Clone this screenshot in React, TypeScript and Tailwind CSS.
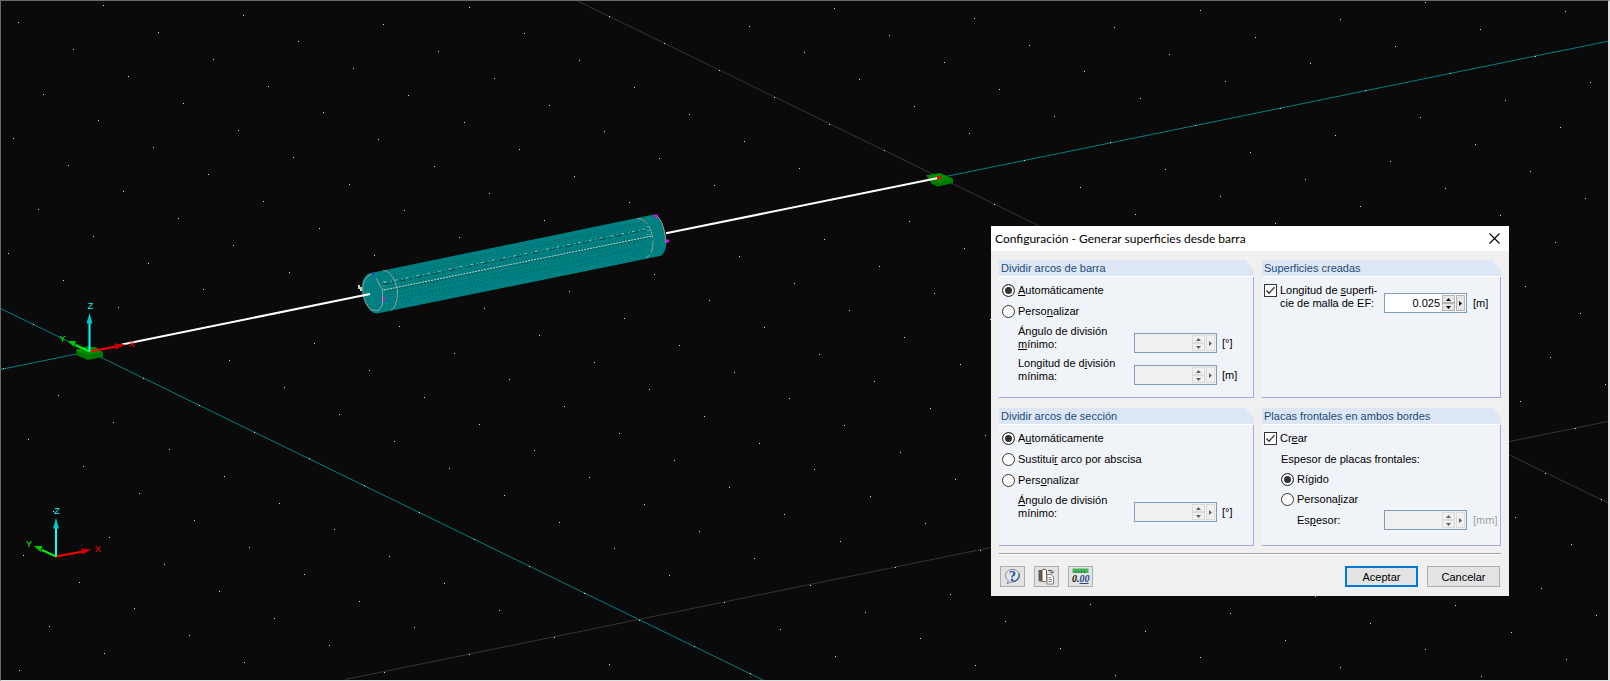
import { ReactNode, useId, useState } from "react";

// grid of the work plane: origin plus one step along each axis
const ORIGIN = { x: 88.8, y: 351.5 };
const STEP_Y = { x: 55.1, y: 26.85 };
const STEP_X = { x: 85.1, y: -17.38 };

function gridDots() {
  const dots: { x: number; y: number }[] = [];
  for (let m = -20; m <= 22; m++) {
    for (let n = -14; n <= 26; n++) {
      const x = Math.round(ORIGIN.x + m * STEP_Y.x + n * STEP_X.x - 0.5);
      const y = Math.round(ORIGIN.y + m * STEP_Y.y + n * STEP_X.y - 0.5);
      if (x > 1 && x < 1608 && y > 1 && y < 679) dots.push({ x, y });
    }
  }
  return dots;
}

const DOTS = gridDots();
const MESH = [4, 7, 10, 13, 16, 19, 22, 25, 28, 31, 34];

function Axes({ x, y }: { x: number; y: number }) {
  return (
    <g transform={`translate(${x} ${y})`} fontFamily="Liberation Sans, sans-serif" fontSize="9" textAnchor="middle">
      <path d="M0 0L27 -5" stroke="#ff0000" strokeWidth="2" />
      <path d="M25 -8L36 -7L26 -2Z" fill="#c80000" />
      <path d="M0 0L-14 -6.5" stroke="#00f000" strokeWidth="2" />
      <path d="M-22 -10.5L-13.5 -10.5L-15.5 -4.5Z" fill="#00c800" />
      <path d="M0 0V-30" stroke="#00ffff" strokeWidth="2" />
      <path d="M0 -38.5L3 -28H-3Z" fill="#00c8c8" />
      <text x="1" y="-43" fill="#00ffff">Z</text>
      <text x="42" y="-5" fill="#ff0000">X</text>
      <text x="-27" y="-10" fill="#00ff00">Y</text>
    </g>
  );
}

function Scene() {
  return (
    <svg className="absolute inset-0 h-full w-full" viewBox="0 0 1610 681" preserveAspectRatio="xMinYMin slice">
      {/* guide lines */}
      <g strokeWidth="1" fill="none">
        <path d="M575.6 0L1610 504" stroke="#343434" />
        <path d="M345 679.5L1610 421" stroke="#343434" />
        <path d="M0 308.2L765 681" stroke="#008080" />
        <path d="M0 369.6L88.8 351.5" stroke="#008080" />
        <path d="M940 177.7L1610 40.8" stroke="#008080" />
      </g>
      <g fill="#e0e0e0" shapeRendering="crispEdges">
        {DOTS.map((d) => (
          <rect key={`${d.x}-${d.y}`} x={d.x} y={d.y} width="1" height="1" />
        ))}
      </g>

      {/* supports */}
      <path d="M76 350L87 346.5L96 347.5L103 352.5V357L88 360L77 355.5Z" fill="#007800" />
      <path d="M76 350L87 346.5L96 347.5L103 352.5L87 355Z" fill="#008c00" />
      <path d="M926 175.5L940 173L953 179V183L938 186.5L932 184Z" fill="#007c00" />
      <path d="M926 175.5L940 173L953 179L938 181Z" fill="#008c00" />

      {/* tube */}
      <path
        d="M371 273L654 214.5C660 215.5 666 232 666.5 241C666.5 249 664 254.5 660 256L377 313.5C368 313.5 362 297 362 286C362 280 365 274 371 273Z"
        fill="#008080"
      />
      <g stroke="#066060" strokeWidth="1" shapeRendering="crispEdges">
        {MESH.map((o, i) => (
          <path
            key={o}
            d={`M${386 + (i % 3) * 3} ${271 + o}L${649 - (i % 2) * 6} ${217 + o}`}
            strokeDasharray={i % 2 ? "1 2" : "1 3"}
          />
        ))}
      </g>
      <g stroke="#064444" strokeWidth="1">
        <path d="M383 284.5L645 230.5" strokeDasharray="6 4 2 5" />
        <path d="M387 291L650 237.5" strokeDasharray="1 2" />
      </g>
      <g stroke="#b8d4d0" strokeWidth="1" fill="none">
        <path d="M384 282.5L645 229" strokeDasharray="3 4 1 3" opacity="0.7" />
        <path d="M384 290L652 236" strokeDasharray="2 1" />
        <path d="M384 281V292M648 226V238" strokeDasharray="1 3" />
      </g>
      <g stroke="#9c9c9c" strokeWidth="1" fill="none">
        <path d="M371 274.5C359 279 361 301 371 310L379 310.5" />
        <path d="M376 278L382.5 290V305L379 310" />
        <path d="M383 270.5C391 270.5 397 283 397.5 292C397.5 301 395 308 391 310" />
        <path d="M637 218.5C647 218 652 230 653 241C653 251 651 256 646 257.5" strokeDasharray="12 3" />
        <path d="M656 215C662 219 665.5 232 665.8 243" />
      </g>
      <g fill="#f000f0">
        <path d="M654.5 214.5h3v3h-3zM666 239.5h3v3h-3zM383 297.5h2v3h-2z" />
        <path d="M372 272.5h2v2h-2z" fill="#5030d0" />
        <path d="M358 285h2v2h2v4h-2v-2h-2z" fill="#c8d8c0" />
      </g>

      {/* member axis */}
      <g stroke="#ffffff" strokeWidth="2">
        <path d="M122 344.5L370 294" />
        <path d="M666 233.3L938 178" />
      </g>
      <path d="M937 176h4v3h-4z" fill="#ff0000" />

      <Axes x={89.5} y={351.5} />
      <Axes x={56} y={556.5} />
    </svg>
  );
}

function Group({ title, children }: { title: string; children: ReactNode }) {
  const id = useId();
  return (
    <div role="group" aria-labelledby={id} className="relative h-[138px] min-w-0 border-r border-b border-[#a6a6ea] bg-[#f0f4f9]">
      <h2 id={id} className="-mr-px flex h-[17px] items-center border-b border-white bg-[#dce6f4] pl-0.5 text-[#1f4a7a]">
        {title}
      </h2>
      {/* cut corner */}
      <svg aria-hidden="true" className="absolute -top-px -right-px h-3 w-3" viewBox="0 0 12 12">
        <path d="M2 0H12V11Z" fill="#f0f0f0" />
      </svg>
      <div className="pt-[3px] leading-[13px]">{children}</div>
    </div>
  );
}

function Radio({ name, checked, onChange, children }: { name: string; checked: boolean; onChange: () => void; children: ReactNode }) {
  return (
    <label className="flex items-center gap-[3px]">
      <input
        type="radio"
        name={name}
        checked={checked}
        onChange={onChange}
        className="h-[13px] w-[13px] shrink-0 appearance-none rounded-full border border-[#333] bg-white checked:bg-[#333] checked:shadow-[inset_0_0_0_2px_white]"
      />
      <span>{children}</span>
    </label>
  );
}

function Check({ id, checked, onChange }: { id: string; checked: boolean; onChange: () => void }) {
  return (
    <span className="relative h-[13px] w-[13px] shrink-0">
      <input
        id={id}
        type="checkbox"
        checked={checked}
        onChange={onChange}
        className="peer block h-[13px] w-[13px] appearance-none border border-[#333] bg-white"
      />
      <svg className="pointer-events-none absolute inset-0 hidden peer-checked:block" viewBox="0 0 13 13" fill="none">
        <path d="M2.5 6.5L5 9.2L10.5 3.2" stroke="#333" strokeWidth="1.3" />
      </svg>
    </span>
  );
}

function Spin({ id, value, disabled }: { id: string; value?: string; disabled?: boolean }) {
  const button = disabled
    ? "flex items-center justify-center border border-[#dcdcdc] bg-[#f0f0f0] text-[#606060]"
    : "flex items-center justify-center border border-[#b4b4b4] bg-[#e6e6e6] text-black";
  return (
    <span className={`flex h-5 w-[83px] shrink-0 border border-[#7f9db9] p-px ${disabled ? "bg-[#f0f0f0]" : "bg-white"}`}>
      <input
        id={id}
        type="text"
        defaultValue={value}
        disabled={disabled}
        className="w-0 min-w-0 flex-1 pr-0.5 text-right"
      />
      <span className="flex w-[13px] flex-col">
        <button type="button" aria-label="Aumentar" disabled={disabled} className={`${button} h-2`}>
          <svg width="5" height="3" viewBox="0 0 5 3"><path d="M0 3L2.5 0L5 3Z" fill="currentColor" /></svg>
        </button>
        <button type="button" aria-label="Disminuir" disabled={disabled} className={`${button} h-2`}>
          <svg width="5" height="3" viewBox="0 0 5 3"><path d="M0 0L2.5 3L5 0Z" fill="currentColor" /></svg>
        </button>
      </span>
      <button type="button" aria-label="Más opciones" disabled={disabled} className={`${button} ml-px h-4 w-[9px]`}>
        <svg width="3" height="5" viewBox="0 0 3 5"><path d="M0 0L3 2.5L0 5Z" fill="currentColor" /></svg>
      </button>
    </span>
  );
}

function FieldRow({ id, unit, children }: { id: string; unit: string; children: ReactNode }) {
  return (
    <div className="flex h-8 pr-3 pl-[19px]">
      <label htmlFor={id} className="flex-1">{children}</label>
      <div className="flex items-center self-start pt-2">
        <Spin id={id} disabled />
        <span className="w-6 pl-[5px]">{unit}</span>
      </div>
    </div>
  );
}

const toolButton = "flex h-[21px] w-[25px] items-center justify-center border border-[#adadad] bg-[#e3e3e3]";

export default function App() {
  const [barra, setBarra] = useState("auto");
  const [seccion, setSeccion] = useState("auto");
  const [placas, setPlacas] = useState("rigido");
  const [malla, setMalla] = useState(true);
  const [crear, setCrear] = useState(true);

  return (
    <main className="relative h-screen overflow-hidden bg-[#0a0a0a]">
      <Scene />
      <div className="pointer-events-none absolute inset-0 border border-r-2 border-[#6a6a6a] border-r-[#e0e0e0] border-b-[#e0e0e0]" />

      <section
        role="dialog"
        aria-labelledby="titulo"
        className="absolute top-[226px] left-[991px] w-[518px] bg-[#f0f0f0] pb-[9px] font-['Liberation_Sans',Arial,sans-serif] text-[11px] text-black"
      >
        <header className="flex h-[25px] items-center justify-between bg-white pr-[9px] pl-1">
          <h1 id="titulo" className="font-[Lato,sans-serif] text-[12px]">
            Configuración - Generar superficies desde barra
          </h1>
          <button type="button" aria-label="Cerrar">
            <svg width="11" height="11" viewBox="0 0 11 11"><path d="M0.5 0.5L10.5 10.5M10.5 0.5L0.5 10.5" stroke="#000" strokeWidth="1.1" /></svg>
          </button>
        </header>

        <form className="px-2 pt-[9px]" onSubmit={(e) => e.preventDefault()}>
          <div className="grid grid-cols-[255fr_239fr] gap-x-2 gap-y-[10px]">
            <Group title="Dividir arcos de barra">
              <div className="flex h-[21px] items-center pl-[3px]">
                <Radio name="barra" checked={barra === "auto"} onChange={() => setBarra("auto")}><u>A</u>utomáticamente</Radio>
              </div>
              <div className="mb-[3px] flex h-[21px] items-center pl-[3px]">
                <Radio name="barra" checked={barra === "pers"} onChange={() => setBarra("pers")}>Perso<u>n</u>alizar</Radio>
              </div>
              <FieldRow id="angulo-barra" unit="[°]">Ángulo de división<br /><u>m</u>ínimo:</FieldRow>
              <FieldRow id="longitud-barra" unit="[m]">Longitud de d<u>i</u>visión<br />mínima:</FieldRow>
            </Group>

            <Group title="Superficies creadas">
              <div className="flex items-start pt-1 pr-1 pl-0.5">
                <Check id="malla" checked={malla} onChange={() => setMalla(!malla)} />
                <label htmlFor="malla" className="flex-1 pl-[3px]">Longitud de <u>s</u>uperfi-<br />cie de malla de EF:</label>
                <div className="flex items-center pt-[9px]">
                  <Spin id="longitud-malla" value="0.025" />
                  <label htmlFor="longitud-malla" className="w-[29px] pl-1.5">[m]</label>
                </div>
              </div>
            </Group>

            <Group title="Dividir arcos de sección">
              <div className="flex h-[21px] items-center pl-[3px]">
                <Radio name="seccion" checked={seccion === "auto"} onChange={() => setSeccion("auto")}>A<u>u</u>tomáticamente</Radio>
              </div>
              <div className="flex h-[21px] items-center pl-[3px]">
                <Radio name="seccion" checked={seccion === "arco"} onChange={() => setSeccion("arco")}>Sustitui<u>r</u> arco por abscisa</Radio>
              </div>
              <div className="mb-[3px] flex h-[21px] items-center pl-[3px]">
                <Radio name="seccion" checked={seccion === "pers"} onChange={() => setSeccion("pers")}>Pers<u>o</u>nalizar</Radio>
              </div>
              <FieldRow id="angulo-seccion" unit="[°]"><u>Á</u>ngulo de división<br />mínimo:</FieldRow>
            </Group>

            <Group title="Placas frontales en ambos bordes">
              <div className="flex h-[21px] items-center gap-[3px] pl-0.5">
                <Check id="crear" checked={crear} onChange={() => setCrear(!crear)} />
                <label htmlFor="crear">Cr<u>e</u>ar</label>
              </div>
              <p className="flex h-5 items-center pl-[19px]">Espesor de placas frontales:</p>
              <div className="flex h-5 items-center pl-[19px]">
                <Radio name="placas" checked={placas === "rigido"} onChange={() => setPlacas("rigido")}>Rí<u>g</u>ido</Radio>
              </div>
              <div className="flex h-5 items-center pl-[19px]">
                <Radio name="placas" checked={placas === "pers"} onChange={() => setPlacas("pers")}>Persona<u>l</u>izar</Radio>
              </div>
              <div className="flex h-[22px] items-center pr-1 pl-[35px]">
                <label htmlFor="espesor" className="flex-1">Es<u>p</u>esor:</label>
                <Spin id="espesor" disabled />
                <span className="w-[29px] pl-1.5 text-[#a0a0a0]">[mm]</span>
              </div>
            </Group>
          </div>

          <hr className="mt-[7px] border-t border-b border-t-[#a0a0a0] border-b-white" />

          <footer className="mt-[11px] flex items-center gap-[9px] px-px">
            <button type="button" aria-label="Ayuda" className={toolButton}>
              <svg width="17" height="17" viewBox="0 0 17 17">
                <path d="M8.5 1.5C12.8 1.5 15.5 4.5 15.5 7.5C15.5 11 12.5 13.5 9 13.5L3 15.5L4.5 12.5C2.5 11.5 1.5 9.5 1.5 7.5C1.5 4 4.5 1.5 8.5 1.5Z" fill="#dfe7f2" stroke="#7b8698" />
                <path d="M15 5.5C16 9.5 13 13.5 8.5 13.7" fill="none" stroke="#5c6678" strokeWidth="1.5" />
                <text x="8.5" y="12.5" textAnchor="middle" fontFamily="Liberation Serif, serif" fontSize="14" fontWeight="bold" fill="#24488f">?</text>
              </svg>
            </button>
            <button type="button" aria-label="Copiar a" className={toolButton}>
              <svg width="17" height="17" viewBox="0 0 17 17">
                <path d="M0.5 2H4V13.5H1.5L0.5 12.5Z" fill="#6a5846" />
                <path d="M4 2C4 1 8.500 1 8.500 2V13C8.500 14 4 14 4 13Z" fill="#fffdf5" stroke="#5f5548" />
                <path d="M10 2.500H14V5M12 3.500L14 5.500L16 3.500" fill="none" stroke="#555" />
                <path d="M9 6.500H13L15.500 9V16H9Z" fill="#fff" stroke="#808080" />
                <path d="M10.500 9.500H13M10.500 11.500H14M10.500 13.500H14" stroke="#808080" />
              </svg>
            </button>
            <button type="button" aria-label="Decimales" className={toolButton}>
              <svg width="19" height="19" viewBox="0 0 19 19">
                <path d="M1.500 1.500H17.500V6H1.500Z" fill="#46b45a" />
                <path d="M4.500 4V6M7.500 4V6M10.500 4V6M13.500 4V6" stroke="#1f7a35" />
                <text x="1" y="15" fontFamily="Liberation Serif, serif" fontSize="10" fontWeight="bold" fontStyle="italic" fill="#111">0.<tspan fill="#24488f">00</tspan></text>
                <path d="M8.500 16.500H17.500" stroke="#24488f" />
              </svg>
            </button>
            <span className="flex-1" />
            <button type="submit" className="h-[21px] w-[73px] border-2 border-[#0078d7] bg-[#e3e3e3] leading-4">Aceptar</button>
            <button type="button" className="h-[21px] w-[73px] border border-[#adadad] bg-[#e3e3e3] leading-4">Cancelar</button>
          </footer>
        </form>
      </section>
    </main>
  );
}
